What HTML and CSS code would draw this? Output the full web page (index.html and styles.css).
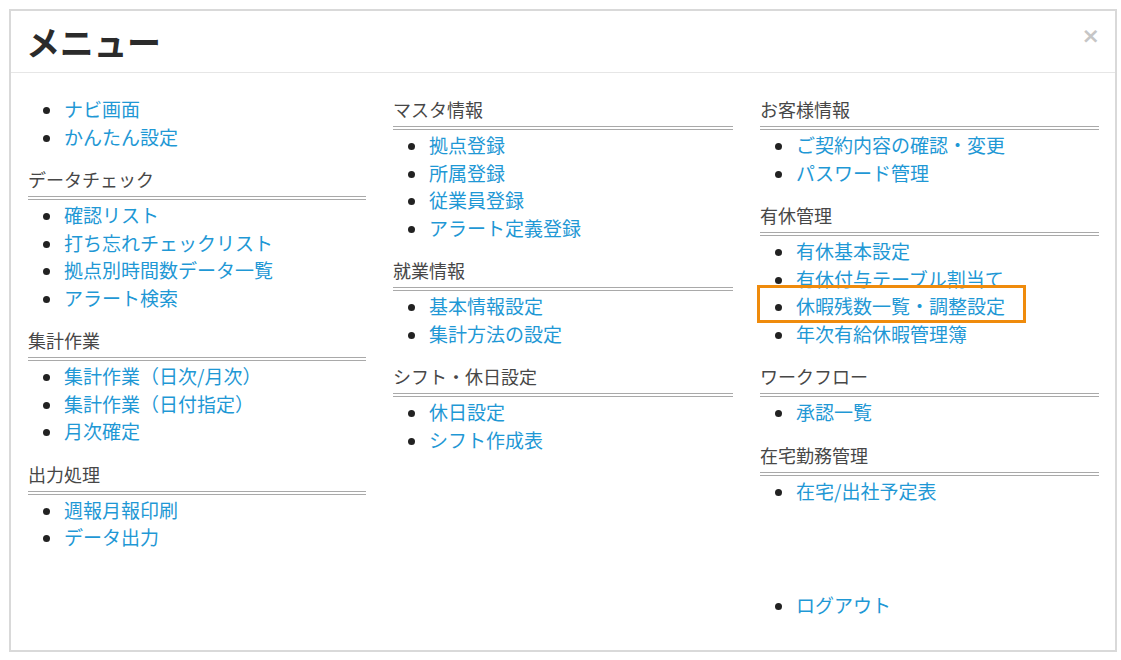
FILE: index.html
```html
<!DOCTYPE html>
<html lang="ja">
<head>
<meta charset="utf-8">
<title>メニュー</title>
<link rel="stylesheet" href="styles.css">
</head>
<body>
<div class="modal">
  <div class="modal-header">
    <h1 class="modal-title">メニュー</h1>
    <span class="close">×</span>
  </div>
  <div class="modal-body">
    <div class="col">
      <ul class="links top">
        <li><a href="#">ナビ画面</a></li>
        <li><a href="#">かんたん設定</a></li>
      </ul>
      <h2 class="sec">データチェック</h2>
      <ul class="links">
        <li><a href="#">確認リスト</a></li>
        <li><a href="#">打ち忘れチェックリスト</a></li>
        <li><a href="#">拠点別時間数データ一覧</a></li>
        <li><a href="#">アラート検索</a></li>
      </ul>
      <h2 class="sec">集計作業</h2>
      <ul class="links">
        <li><a href="#">集計作業（日次/月次）</a></li>
        <li><a href="#">集計作業（日付指定）</a></li>
        <li><a href="#">月次確定</a></li>
      </ul>
      <h2 class="sec">出力処理</h2>
      <ul class="links">
        <li><a href="#">週報月報印刷</a></li>
        <li><a href="#">データ出力</a></li>
      </ul>
    </div>
    <div class="col">
      <h2 class="sec first">マスタ情報</h2>
      <ul class="links">
        <li><a href="#">拠点登録</a></li>
        <li><a href="#">所属登録</a></li>
        <li><a href="#">従業員登録</a></li>
        <li><a href="#">アラート定義登録</a></li>
      </ul>
      <h2 class="sec">就業情報</h2>
      <ul class="links">
        <li><a href="#">基本情報設定</a></li>
        <li><a href="#">集計方法の設定</a></li>
      </ul>
      <h2 class="sec">シフト・休日設定</h2>
      <ul class="links">
        <li><a href="#">休日設定</a></li>
        <li><a href="#">シフト作成表</a></li>
      </ul>
    </div>
    <div class="col">
      <h2 class="sec first">お客様情報</h2>
      <ul class="links">
        <li><a href="#">ご契約内容の確認・変更</a></li>
        <li><a href="#">パスワード管理</a></li>
      </ul>
      <h2 class="sec">有休管理</h2>
      <ul class="links">
        <li><a href="#">有休基本設定</a></li>
        <li><a href="#">有休付与テーブル割当て</a></li>
        <li class="highlight"><a href="#">休暇残数一覧・調整設定</a></li>
        <li><a href="#">年次有給休暇管理簿</a></li>
      </ul>
      <h2 class="sec">ワークフロー</h2>
      <ul class="links">
        <li><a href="#">承認一覧</a></li>
      </ul>
      <h2 class="sec">在宅勤務管理</h2>
      <ul class="links">
        <li><a href="#">在宅/出社予定表</a></li>
      </ul>
      <ul class="links logout">
        <li><a href="#">ログアウト</a></li>
      </ul>
    </div>
  </div>
</div>
</body>
</html>
```

FILE: styles.css
```css
html, body {
  margin: 0;
  padding: 0;
  background: #ffffff;
}
body {
  padding: 9px 4px 0 9px;
  font-family: "Noto Sans CJK JP", "Noto Sans", sans-serif;
  color: #333333;
}
.modal {
  width: 1104px;
  height: 639px;
  border: 2px solid #d9d9d9;
  background: #fff;
  box-sizing: content-box;
}
.modal-header {
  height: 61px;
  border-bottom: 1px solid #e6e6e6;
  display: flex;
  align-items: center;
  justify-content: space-between;
  padding: 0 15px 0 15px;
}
.modal-title {
  margin: 0;
  font-size: 34px;
  font-weight: bold;
  line-height: 40px;
  color: #2b2b2b;
  letter-spacing: -0.3px;
}
.close {
  font-family: "DejaVu Sans", sans-serif;
  font-size: 22px;
  font-weight: bold;
  color: #c6c6c6;
  line-height: 1;
  margin-top: -12px;
}
.modal-body {
  display: grid;
  grid-template-columns: 338px 340px 339px;
  column-gap: 27px;
  padding: 23px 0 0 17px;
}
.sec {
  margin: 16px 0 0 0;
  font-size: 18px;
  font-weight: normal;
  line-height: 27px;
  color: #474747;
  padding-bottom: 3px;
  border-bottom: 4px double #a9a9a9;
}
.sec.first {
  margin-top: 0;
}
.links {
  margin: 0;
  padding: 1px 0 0 36px;
  list-style: disc;
  color: #222;
}
.links.top {
  padding-top: 0;
  margin-top: -1px;
}
.links li {
  font-size: 19px;
  line-height: 27.5px;
}
.links a {
  color: #1f98d5;
  text-decoration: none;
}
.links li.highlight {
  position: relative;
}
.links li.highlight::before {
  content: "";
  position: absolute;
  left: -39px;
  top: -7px;
  width: 263px;
  height: 32px;
  border: 3px solid #ef8b0c;
}
.logout {
  margin-top: 86px;
}
```
